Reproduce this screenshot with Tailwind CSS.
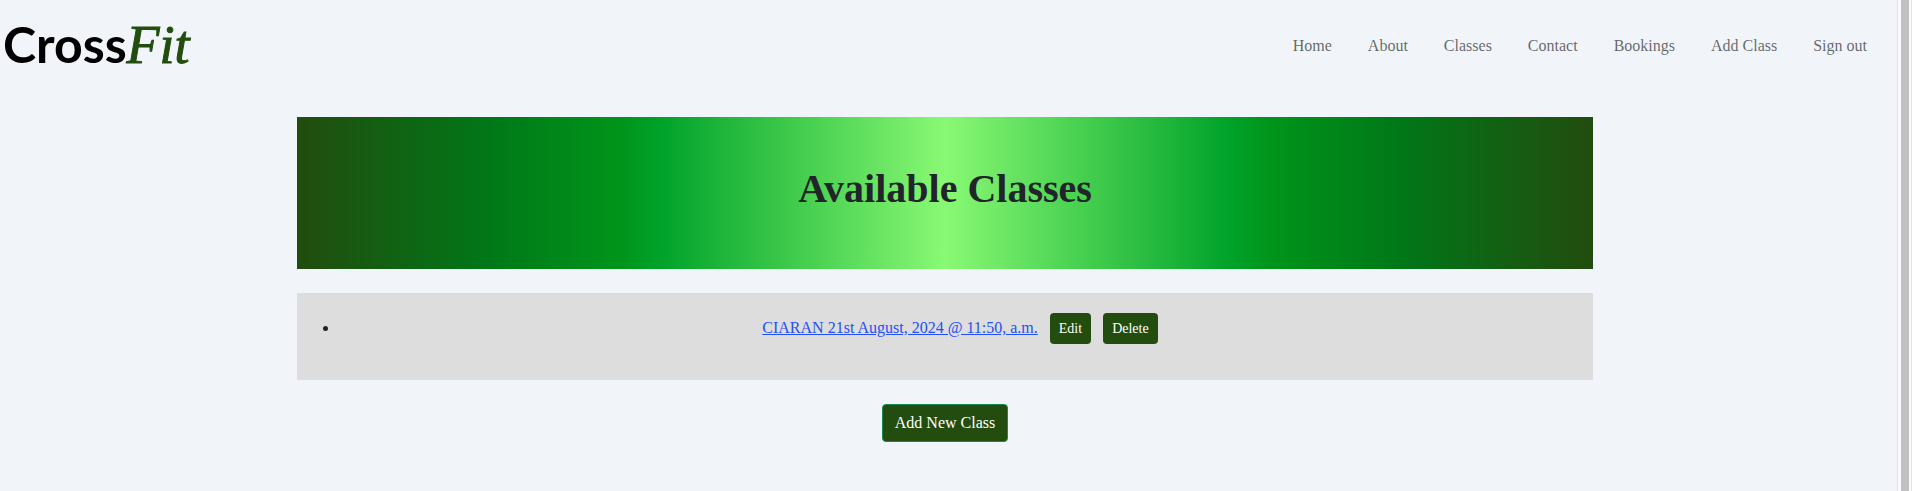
<!DOCTYPE html>
<html lang="en">
<head>
<meta charset="utf-8">
<meta name="viewport" content="width=device-width, initial-scale=1">
<title>CrossFit</title>
<script src="https://cdn.jsdelivr.net/npm/@tailwindcss/browser@4"></script>
</head>
<body class="flex min-h-screen bg-[#f1f5fa] font-['Liberation_Serif','Times_New_Roman',serif] text-base text-[#212529]">
<div class="flex-1 pr-[7px]">
  <header class="flex h-[93px] items-center justify-between pr-[23px] pb-0.5 pl-[3px]">
    <a href="#" class="flex items-baseline pb-0.5 leading-none text-black"><span class="font-['Lato',sans-serif] text-[50px] font-bold">Cross</span><span class="text-[54px] italic text-[#224d0f] [-webkit-text-stroke:1px_#224d0f]">Fit</span></a>
    <nav class="flex flex-wrap gap-x-9 text-black/60">
      <a href="#">Home</a>
      <a href="#">About</a>
      <a href="#">Classes</a>
      <a href="#">Contact</a>
      <a href="#">Bookings</a>
      <a href="#">Add Class</a>
      <a href="#">Sign out</a>
    </nav>
  </header>
  <main class="mx-auto mt-6 flex max-w-[1296px] flex-col gap-6 text-center">
    <div class="bg-[linear-gradient(90deg,#224c0f_0%,#007818_15%,#00951a_25%,#00a22a_28%,#89f974_50%,#00a22a_72%,#00951a_75%,#007818_85%,#224c0f_100%)] pt-12 pb-14">
      <h1 class="text-[40px] leading-[48px] font-bold">Available Classes</h1>
    </div>
    <ul class="list-disc bg-[#ddd] pt-5 pr-3 pb-9 pl-[42px]">
      <li>
        <a href="#" class="text-[#2450f5] underline">CIARAN 21st August, 2024 @ 11:50, a.m.</a>
        <button type="button" class="ml-2 rounded-sm bg-[#224d0f] px-[9px] py-[5px] text-sm leading-[21px] text-white">Edit</button>
        <button type="button" class="ml-2 rounded-sm bg-[#224d0f] px-[9px] py-[5px] text-sm leading-[21px] text-white">Delete</button>
      </li>
    </ul>
    <div>
      <button type="button" class="rounded-sm border border-[#198754] bg-[#224d0f] px-3 py-1.5 leading-6 text-white">Add New Class</button>
    </div>
  </main>
</div>
<div aria-hidden="true" class="flex w-[15px] border-x border-[#e4e4e4] bg-[#fafafa] pl-[3px]">
  <div class="w-2 bg-[#c1c1c1]"></div>
</div>
</body>
</html>
